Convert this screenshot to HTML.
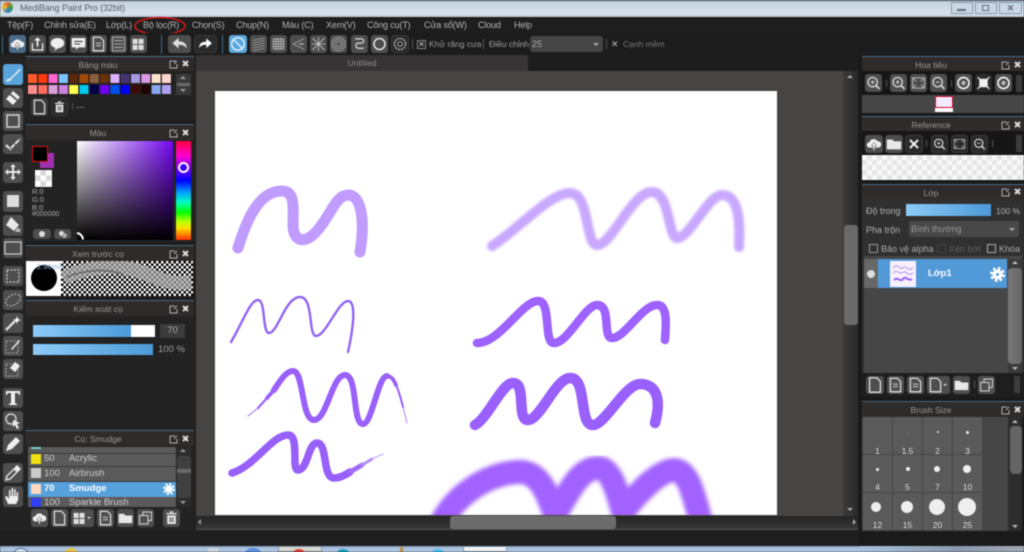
<!DOCTYPE html>
<html><head><meta charset="utf-8"><title>MediBang Paint Pro</title>
<style>
html,body{margin:0;padding:0;background:#1f1f1f}
#r{position:relative;width:1024px;height:552px;overflow:hidden;background:#1f1f1f;font-family:"Liberation Sans",sans-serif;font-size:9px;color:#a8a8a8;filter:blur(.4px)}
#r div,#r span,#r svg{position:absolute}
#r svg *{position:static}
.t{white-space:nowrap;line-height:12px}
.m{top:19px;font-size:9px;letter-spacing:-.15px;color:#b4b4b4;white-space:nowrap;line-height:12px}
.b{background:#4f4e4e;border-radius:3px}
.d{background:#2a2a2a;border-radius:3px;border:1px solid #3a3a3a;box-sizing:border-box}
.h{background:#2f2b2b;border-top:1px solid #4a6a80;box-sizing:border-box;text-align:center;line-height:16px;color:#989898;font-size:8.5px;padding-right:24px}
.sl{background:linear-gradient(90deg,#8ccbf8,#4c9ad8)}
.sep{width:1px;background:#555}
.row{left:28px;width:148px;background:#5a5a5a;border-bottom:1px solid #3a3a3a;box-sizing:border-box}
.c{background:#5a5a5a;width:29px;height:37px}
.c i{position:absolute;background:#eee;border-radius:50%;display:block}
.c b{position:absolute;left:0;right:0;bottom:0;text-align:center;font-weight:normal;font-size:8.5px;color:#ddd;line-height:10px}
</style></head><body>
<div id="r">
<svg width="0" height="0" style="display:none"><defs>
<symbol id="brush" viewBox="0 0 20 20"><path d="M3 17c1-3 3-3 4-3L17 4l1 1L8 15c-1 2-3 2-5 2z" fill="#eee"/></symbol>
<symbol id="eraser" viewBox="0 0 20 20"><path d="M10 3l7 6-7 8-7-6z" fill="#eee"/><path d="M7 6l7 6" stroke="#444" stroke-width="1.5"/></symbol>
<symbol id="square" viewBox="0 0 20 20"><rect x="4" y="4" width="12" height="12" fill="none" stroke="#ccc" stroke-width="1.6"/></symbol>
<symbol id="check" viewBox="0 0 20 20"><path d="M3 11l5 5M8 14L17 5" stroke="#e8e8e8" stroke-width="2" fill="none" stroke-dasharray="5 1"/></symbol>
<symbol id="move" viewBox="0 0 20 20"><path d="M10 2l3 3h-2v4h4V7l3 3-3 3v-2h-4v4h2l-3 3-3-3h2v-4H5v2l-3-3 3-3v2h4V5H7z" fill="#e8e8e8"/></symbol>
<symbol id="fill" viewBox="0 0 20 20"><rect x="4" y="4" width="12" height="12" fill="#ddd"/></symbol>
<symbol id="bucket" viewBox="0 0 20 20"><path d="M8 2l8 8-5 6-8-6z" fill="#e8e8e8"/><path d="M14 13c3 0 4 2 3 4h-5z" fill="#bbb"/></symbol>
<symbol id="grad" viewBox="0 0 20 20"><defs><linearGradient id="g1"><stop offset="0" stop-color="#777"/><stop offset="1" stop-color="#eee"/></linearGradient></defs><rect x="2" y="4" width="16" height="12" fill="url(#g1)" stroke="#ddd"/></symbol>
<symbol id="sel" viewBox="0 0 20 20"><rect x="4" y="4" width="12" height="12" fill="none" stroke="#ccc" stroke-width="1.3" stroke-dasharray="2 1.5"/></symbol>
<symbol id="lasso" viewBox="0 0 20 20"><ellipse cx="10" cy="10" rx="8" ry="5" transform="rotate(-30 10 10)" fill="none" stroke="#aaa" stroke-width="1.3" stroke-dasharray="2 1.5"/></symbol>
<symbol id="wand" viewBox="0 0 20 20"><path d="M3 17L12 8" stroke="#ddd" stroke-width="2.4"/><path d="M14 3l1 3 3 1-3 1-1 3-1-3-3-1 3-1z" fill="#fff"/></symbol>
<symbol id="pensel" viewBox="0 0 20 20"><rect x="3" y="5" width="12" height="12" fill="none" stroke="#aaa" stroke-dasharray="2 1.5"/><path d="M8 13l8-9 1 1-8 9z" fill="#eee"/></symbol>
<symbol id="erasel" viewBox="0 0 20 20"><rect x="3" y="5" width="12" height="12" fill="none" stroke="#aaa" stroke-dasharray="2 1.5"/><path d="M12 3l5 4-5 6-5-4z" fill="#eee"/></symbol>
<symbol id="T" viewBox="0 0 20 20"><path d="M3 3h14v4h-1l-1-2h-3v10l2 1v1H6v-1l2-1V5H5L4 7H3z" fill="#eee"/></symbol>
<symbol id="lsel" viewBox="0 0 20 20"><circle cx="8" cy="8" r="5" fill="none" stroke="#ccc" stroke-width="1.5"/><path d="M10 9l7 3-3 1 2 4-2 1-2-4-2 2z" fill="#eee"/></symbol>
<symbol id="pen" viewBox="0 0 20 20"><path d="M3 17l2-6 8-8 4 4-8 8z" fill="#eee"/></symbol>
<symbol id="drop" viewBox="0 0 20 20"><path d="M3 17l1-4 7-7 3 3-7 7z" fill="none" stroke="#ddd" stroke-width="1.5"/><path d="M11 5l3-3 4 4-3 3z" fill="#eee"/></symbol>
<symbol id="hand" viewBox="0 0 20 20"><path d="M5 18l-3-7 2-1 2 3V4h1.500v6h1V2h1.600v8h1V3h1.500v7h1V6h1.500v8l-2 4z" fill="#eee"/></symbol>
<symbol id="cloud" viewBox="0 0 20 20"><path d="M5 14a3 3 0 010-6 5 5 0 019-1 3.500 3.500 0 011 7z" fill="#eee"/><path d="M10 8l3 4h-2v5H9v-5H7z" fill="#eee" stroke="#444" stroke-width=".5"/></symbol>
<symbol id="share" viewBox="0 0 20 20"><path d="M4 9v8h12V9" fill="none" stroke="#eee" stroke-width="1.500"/><path d="M10 2l4 4h-3v7H9V6H6z" fill="#eee"/></symbol>
<symbol id="bub" viewBox="0 0 20 20"><ellipse cx="10" cy="9" rx="8" ry="6" fill="#eee"/><path d="M8 14l-2 4 5-3z" fill="#eee"/></symbol>
<symbol id="bub2" viewBox="0 0 20 20"><path d="M2 3h16v11h-8l-3 3v-3H2z" fill="#eee"/><path d="M5 7h10M5 10h7" stroke="#444" stroke-width="1.300"/></symbol>
<symbol id="doc" viewBox="0 0 20 20"><path d="M4 2h8l4 4v12H4z" fill="none" stroke="#ddd" stroke-width="1.500"/><path d="M7 9h6M7 12h6" stroke="#ddd"/></symbol>
<symbol id="page" viewBox="0 0 20 20"><path d="M4 2h8l4 4v12H4z" fill="none" stroke="#ddd" stroke-width="1.500"/></symbol>
<symbol id="list" viewBox="0 0 20 20"><rect x="3" y="2" width="14" height="16" fill="none" stroke="#bbb"/><path d="M5 6h10M5 10h10M5 14h10" stroke="#bbb"/></symbol>
<symbol id="tiles" viewBox="0 0 20 20"><path d="M3 4h6v6H3zM10 4h6v6h-6zM3 11h6v6H3zM10 11h6v6h-6z" fill="#ddd"/></symbol>
<symbol id="undo" viewBox="0 0 20 20"><path d="M2 9l7-6v4c5 0 9 2 9 8-2-3-5-4-9-4v4z" fill="#ddd"/></symbol>
<symbol id="redo" viewBox="0 0 20 20"><path d="M18 9l-7-6v4C6 7 2 9 2 15c2-3 5-4 9-4v4z" fill="#fff"/></symbol>
<symbol id="no" viewBox="0 0 20 20"><circle cx="10" cy="10" r="7" fill="none" stroke="#fff" stroke-width="1.300"/><path d="M5 5l10 10" stroke="#fff" stroke-width="1.300"/></symbol>
<symbol id="s1" viewBox="0 0 20 20"><path d="M3 6l14-3M3 9l14-3M3 12l14-3M3 15l14-3M3 18l14-3" stroke="#999"/></symbol>
<symbol id="s2" viewBox="0 0 20 20"><path d="M4 4h12v12H4zM7 3v14M10 3v14M13 3v14M3 7h14M3 10h14M3 13h14" stroke="#bbb" fill="none"/></symbol>
<symbol id="s3" viewBox="0 0 20 20"><path d="M16 4L4 10l12 6M16 9l-6 1 6 1" stroke="#aaa" fill="none"/></symbol>
<symbol id="s4" viewBox="0 0 20 20"><path d="M3 3l14 14M17 3L3 17M10 2v16M2 10h16" stroke="#ccc"/></symbol>
<symbol id="s5" viewBox="0 0 20 20"><circle cx="10" cy="10" r="8" fill="none" stroke="#aaa"/><circle cx="10" cy="10" r="5.500" fill="none" stroke="#aaa"/><circle cx="10" cy="10" r="3" fill="none" stroke="#aaa"/></symbol>
<symbol id="s6" viewBox="0 0 20 20"><path d="M5 4h7c4 0 4 5 0 5H8c-3 0-3 6 1 6h6" fill="none" stroke="#ddd" stroke-width="1.400"/></symbol>
<symbol id="s7" viewBox="0 0 20 20"><circle cx="10" cy="10" r="6.500" fill="none" stroke="#eee" stroke-width="1.600"/></symbol>
<symbol id="gear" viewBox="0 0 20 20"><circle cx="10" cy="10" r="3" fill="none" stroke="#ccc"/><circle cx="10" cy="10" r="7" fill="none" stroke="#ccc" stroke-width="1.500" stroke-dasharray="2.500 1.200"/></symbol>
<symbol id="trash" viewBox="0 0 20 20"><path d="M4 5h12M8 3h4" stroke="#eee" stroke-width="1.500"/><path d="M5 7h10v10H5z" fill="#eee"/><path d="M8 9v6M10 9v6M12 9v6" stroke="#444"/></symbol>
<symbol id="folder" viewBox="0 0 20 20"><path d="M2 5h6l2 2h8v9H2z" fill="#e8e8e8"/></symbol>
<symbol id="dup" viewBox="0 0 20 20"><rect x="3" y="7" width="10" height="10" fill="none" stroke="#ccc" stroke-width="1.300"/><path d="M7 7V3h10v10h-4" fill="none" stroke="#ccc" stroke-width="1.300"/></symbol>
<symbol id="zoomp" viewBox="0 0 20 20"><circle cx="9" cy="9" r="5.500" fill="none" stroke="#ddd" stroke-width="1.500"/><path d="M13 13l4 4" stroke="#ddd" stroke-width="2"/><path d="M6.500 9h5M9 6.500v5" stroke="#ddd"/></symbol>
<symbol id="zoomm" viewBox="0 0 20 20"><circle cx="9" cy="9" r="5.500" fill="none" stroke="#ddd" stroke-width="1.500"/><path d="M13 13l4 4" stroke="#ddd" stroke-width="2"/><path d="M6.500 9h5" stroke="#ddd"/></symbol>
<symbol id="fit" viewBox="0 0 20 20"><rect x="3" y="4" width="14" height="12" fill="none" stroke="#ccc"/><path d="M4 5l3 3M16 5l-3 3M4 15l3-3M16 15l-3-3" stroke="#ccc"/></symbol>
<symbol id="rot" viewBox="0 0 20 20"><circle cx="10" cy="10" r="6.500" fill="none" stroke="#eee" stroke-width="2"/><circle cx="10" cy="10" r="2.500" fill="#bbb"/></symbol>
<symbol id="cross" viewBox="0 0 20 20"><path d="M5 5l10 10M15 5L5 15" stroke="#eee" stroke-width="2.500"/></symbol>
<symbol id="frame" viewBox="0 0 20 20"><rect x="5" y="5" width="10" height="10" fill="#eee"/><path d="M3 3l3 3M17 3l-3 3M3 17l3-3M17 17l-3-3" stroke="#eee" stroke-width="1.500"/></symbol>
</defs></svg>

<!-- title bar -->
<div style="left:0;top:0;width:1024px;height:17px;background:linear-gradient(#5c6a74 0,#c6d2de 2px,#d8e2ec 14px,#c0ccd8 16px)"></div>
<div style="left:2px;top:2px;width:11px;height:11px;border-radius:50%;background:conic-gradient(#e8702a,#38a040,#3080d0,#e8c030,#e8702a)"></div>
<div class="t" style="left:20px;top:2px;font-size:9px;letter-spacing:-.12px;color:#5a5f66">MediBang Paint Pro (32bit)</div>
<div style="left:951px;top:2px;width:22px;height:12px;background:#c8d8e6;border:1px solid #8a9aaa;box-sizing:border-box"><span style="left:5px;top:6px;width:9px;height:2px;background:#667"></span></div>
<div style="left:975px;top:2px;width:22px;height:12px;background:#c8d8e6;border:1px solid #8a9aaa;box-sizing:border-box"><span style="left:6px;top:2px;width:7px;height:6px;border:1px solid #667;box-sizing:border-box"></span></div>
<div style="left:999px;top:2px;width:23px;height:12px;background:#c8d8e6;border:1px solid #8a9aaa;box-sizing:border-box;text-align:center;color:#667;line-height:10px;font-size:9px;font-weight:bold">✕</div>

<!-- menu -->
<div style="left:0;top:17px;width:1024px;height:16px;background:#1e1e1e;border-bottom:1px solid #2c2c2c"></div>
<span class="m" style="left:7px">Tệp(F)</span><span class="m" style="left:44px">Chỉnh sửa(E)</span><span class="m" style="left:106px">Lớp(L)</span><span class="m" style="left:143px">Bộ lọc(R)</span><span class="m" style="left:192px">Chọn(S)</span><span class="m" style="left:236px">Chụp(N)</span><span class="m" style="left:282px">Màu (C)</span><span class="m" style="left:326px">Xem(V)</span><span class="m" style="left:367px">Công cụ(T)</span><span class="m" style="left:424px">Cửa sổ(W)</span><span class="m" style="left:478px">Cloud</span><span class="m" style="left:514px">Help</span>
<svg style="left:130px;top:15px" width="60" height="22"><ellipse cx="30" cy="11" rx="25" ry="8.500" fill="none" stroke="#d01818" stroke-width="1.500"/></svg>

<!-- toolbar -->
<div style="left:0;top:33px;width:1024px;height:22px;background:#1c1c1c"></div>
<div class="sep" style="left:2px;top:35px;height:19px;background:#3e6a8c"></div>
<div class="b" style="left:9px;top:35px;width:17px;height:18px;background:#4a6a88"><svg width="17" height="18"><use href="#cloud"/></svg></div>
<div class="b" style="left:29px;top:35px;width:17px;height:18px"><svg width="17" height="18"><use href="#share"/></svg></div>
<div class="b" style="left:49px;top:35px;width:17px;height:18px"><svg width="17" height="18"><use href="#bub"/></svg></div>
<div class="b" style="left:70px;top:35px;width:17px;height:18px"><svg width="17" height="18"><use href="#bub2"/></svg></div>
<div class="b" style="left:90px;top:35px;width:17px;height:18px"><svg width="17" height="18"><use href="#doc"/></svg></div>
<div class="b" style="left:110px;top:35px;width:17px;height:18px"><svg width="17" height="18"><use href="#list"/></svg></div>
<div class="b" style="left:130px;top:35px;width:17px;height:18px"><svg width="17" height="18"><use href="#tiles"/></svg></div>
<div class="sep" style="left:161px;top:35px;height:19px;background:#3e6a8c"></div>
<div class="b" style="left:168px;top:35px;width:23px;height:18px"><svg x="0" width="23" height="18"><use href="#undo"/></svg></div>
<div class="d" style="left:194px;top:35px;width:23px;height:18px"><svg width="21" height="16"><use href="#redo"/></svg></div>
<div class="sep" style="left:222px;top:35px;height:19px;background:#3e6a8c"></div>
<div class="b" style="left:229px;top:35px;width:18px;height:18px;background:#5aa8e0"><svg width="18" height="18"><use href="#no"/></svg></div>
<div class="b" style="left:250px;top:35px;width:17px;height:18px"><svg width="17" height="18"><use href="#s1"/></svg></div>
<div class="b" style="left:270px;top:35px;width:17px;height:18px"><svg width="17" height="18"><use href="#s2"/></svg></div>
<div class="b" style="left:290px;top:35px;width:17px;height:18px"><svg width="17" height="18"><use href="#s3"/></svg></div>
<div class="b" style="left:310px;top:35px;width:17px;height:18px"><svg width="17" height="18"><use href="#s4"/></svg></div>
<div class="b" style="left:330px;top:35px;width:17px;height:18px"><svg width="17" height="18"><use href="#s5"/></svg></div>
<div class="b" style="left:351px;top:35px;width:17px;height:18px"><svg width="17" height="18"><use href="#s6"/></svg></div>
<div class="b" style="left:371px;top:35px;width:17px;height:18px"><svg width="17" height="18"><use href="#s7"/></svg></div>
<div class="d" style="left:391px;top:35px;width:18px;height:18px"><svg width="16" height="16"><use href="#gear"/></svg></div>
<div class="sep" style="left:412px;top:39px;height:10px"></div>
<div style="left:417px;top:40px;width:9px;height:9px;border:1px solid #888;box-sizing:border-box;color:#ccc;font-size:8px;line-height:7px;text-align:center">✕</div>
<span class="t" style="left:429px;top:38px;font-size:8.500px;color:#9a9a9a">Khử răng cưa</span>
<div class="sep" style="left:483px;top:39px;height:10px"></div>
<span class="t" style="left:489px;top:38px;font-size:8.500px;color:#a0a0a0">Điều chỉnh</span>
<div class="b" style="left:530px;top:36px;width:73px;height:16px;background:#454545"><span class="t" style="left:2px;top:2px;color:#a8a8a8;font-size:9px">25</span><span style="left:63px;top:7px;border:3px solid transparent;border-top-color:#aaa"></span></div>
<div class="sep" style="left:606px;top:39px;height:10px"></div>
<span style="left:611px;top:38px;font-size:9px;color:#bbb;line-height:12px">✕</span>
<span class="t" style="left:623px;top:38px;font-size:8.500px;color:#7a7a7a">Cạnh mềm</span>

<!-- left tools -->
<div style="left:0;top:55px;width:26px;height:475px;background:#232323"></div>
<div class="b" style="left:3px;top:64px;width:20px;height:21px;background:#5aa4dc"><svg width="20" height="21"><use href="#brush"/></svg></div>
<div class="b" style="left:3px;top:88px;width:20px;height:20px"><svg width="20" height="20"><use href="#eraser"/></svg></div>
<div class="b" style="left:3px;top:111px;width:20px;height:20px"><svg width="20" height="20"><use href="#square"/></svg></div>
<div class="b" style="left:3px;top:134px;width:20px;height:20px"><svg width="20" height="20"><use href="#check"/></svg></div>
<div class="b" style="left:3px;top:162px;width:20px;height:21px"><svg width="20" height="20"><use href="#move"/></svg></div>
<div class="b" style="left:3px;top:191px;width:20px;height:21px"><svg width="20" height="20"><use href="#fill"/></svg></div>
<div class="b" style="left:3px;top:215px;width:20px;height:21px"><svg width="20" height="20"><use href="#bucket"/></svg></div>
<div class="b" style="left:3px;top:238px;width:20px;height:20px"><svg width="20" height="20"><use href="#grad"/></svg></div>
<div class="b" style="left:3px;top:266px;width:20px;height:20px"><svg width="20" height="20"><use href="#sel"/></svg></div>
<div class="b" style="left:3px;top:290px;width:20px;height:20px"><svg width="20" height="20"><use href="#lasso"/></svg></div>
<div class="b" style="left:3px;top:313px;width:20px;height:20px"><svg width="20" height="20"><use href="#wand"/></svg></div>
<div class="b" style="left:3px;top:336px;width:20px;height:20px"><svg width="20" height="20"><use href="#pensel"/></svg></div>
<div class="b" style="left:3px;top:359px;width:20px;height:20px"><svg width="20" height="20"><use href="#erasel"/></svg></div>
<div class="b" style="left:3px;top:388px;width:20px;height:20px"><svg width="20" height="20"><use href="#T"/></svg></div>
<div class="b" style="left:3px;top:411px;width:20px;height:20px"><svg width="20" height="20"><use href="#lsel"/></svg></div>
<div class="b" style="left:3px;top:434px;width:20px;height:20px"><svg width="20" height="20"><use href="#pen"/></svg></div>
<div class="b" style="left:3px;top:463px;width:20px;height:20px"><svg width="20" height="20"><use href="#drop"/></svg></div>
<div class="b" style="left:3px;top:486px;width:20px;height:21px"><svg width="20" height="20"><use href="#hand"/></svg></div>

<!-- left panels -->
<div style="left:26px;top:56px;width:168px;height:474px;background:#1c1c1c"></div>
<!-- palette -->
<div class="h" style="left:26px;top:56px;width:168px;height:15px">Bảng màu</div>
<div style="left:26px;top:71px;width:168px;height:50px;background:#222"></div>
<svg style="left:28px;top:74px" width="147" height="21"><g id="p">
<rect x="0" y="0" width="9" height="9" fill="#ff5a2a"/><rect x="10.300" y="0" width="9" height="9" fill="#ff3c0a"/><rect x="20.600" y="0" width="9" height="9" fill="#ff66cc"/><rect x="30.900" y="0" width="9" height="9" fill="#7cc4ff"/><rect x="41.200" y="0" width="9" height="9" fill="#5a2808"/><rect x="51.500" y="0" width="9" height="9" fill="#a04a08"/><rect x="61.800" y="0" width="9" height="9" fill="#8a6040"/><rect x="72.100" y="0" width="9" height="9" fill="#6a3008"/><rect x="82.400" y="0" width="9" height="9" fill="#dcb0ff"/><rect x="92.700" y="0" width="9" height="9" fill="#463470"/><rect x="103" y="0" width="9" height="9" fill="#a898e0"/><rect x="113.300" y="0" width="9" height="9" fill="#dc98e0"/><rect x="123.600" y="0" width="9" height="9" fill="#ffe4cc"/><rect x="133.900" y="0" width="9" height="9" fill="#ffd4cc"/>
<rect x="0" y="11" width="9" height="9" fill="#ff8c8c"/><rect x="10.300" y="11" width="9" height="9" fill="#ff6c60"/><rect x="20.600" y="11" width="9" height="9" fill="#dca0d8"/><rect x="30.900" y="11" width="9" height="9" fill="#cc80e0"/><rect x="41.200" y="11" width="9" height="9" fill="#ffff50"/><rect x="51.500" y="11" width="9" height="9" fill="#00c8f0"/><rect x="61.800" y="11" width="9" height="9" fill="#00004a"/><rect x="72.100" y="11" width="9" height="9" fill="#7000f0"/><rect x="82.400" y="11" width="9" height="9" fill="#0050f0"/><rect x="92.700" y="11" width="9" height="9" fill="#0000f0"/><rect x="103" y="11" width="9" height="9" fill="#380c00"/><rect x="113.300" y="11" width="9" height="9" fill="#200400"/><rect x="123.600" y="11" width="9" height="9" fill="#88a8f0"/><rect x="133.900" y="11" width="9" height="9" fill="#b0a0f0"/>
</g></svg>
<div style="left:176px;top:74px;width:15px;height:21px;background:#3a3a3a"></div>
<span style="left:180px;top:76px;border:3px solid transparent;border-bottom-color:#999;border-top:0"></span>
<div style="left:177px;top:83px;width:13px;height:3px;background:#6a6a6a"></div>
<span style="left:180px;top:89px;border:3px solid transparent;border-top-color:#999;border-bottom:0"></span>
<div class="b" style="left:31px;top:98px;width:17px;height:18px;background:#3c3c3c"><svg width="17" height="18"><use href="#page"/></svg></div>
<div class="d" style="left:51px;top:98px;width:17px;height:18px"><svg width="15" height="16"><use href="#trash"/></svg></div>
<div class="sep" style="left:72px;top:103px;height:7px"></div>
<span class="t" style="left:76px;top:101px;font-size:9px;color:#999">---</span>
<!-- color -->
<div class="h" style="left:26px;top:124px;width:168px;height:16px">Màu</div>
<div style="left:26px;top:140px;width:168px;height:102px;background:#232323"></div>
<div style="left:40px;top:153px;width:14px;height:15px;background:#a030b0"></div>
<div style="left:32px;top:146px;width:16px;height:16px;background:#000;border:1px solid #e01010;box-sizing:border-box"></div>
<div style="left:35px;top:170px;width:17px;height:17px;background:repeating-conic-gradient(#d8d8d8 0 25%,#fff 0 50%) 0 0/11px 11px"></div>
<span class="t" style="left:32px;top:188px;font-size:7.500px;line-height:8px;color:#aaa">R:0</span>
<span class="t" style="left:32px;top:196px;font-size:7.500px;line-height:8px;color:#aaa">G:0</span>
<span class="t" style="left:32px;top:204px;font-size:7.500px;line-height:8px;color:#aaa">B:0</span>
<span class="t" style="left:32px;top:210px;font-size:7px;line-height:9px;color:#aaa">#000000</span>
<div class="b" style="left:33px;top:229px;width:18px;height:10px"><span style="left:6px;top:2px;width:6px;height:6px;border-radius:50%;background:#ddd"></span></div>
<div class="b" style="left:54px;top:229px;width:17px;height:10px"><span style="left:5px;top:2px;width:5px;height:5px;border-radius:50%;background:#ddd"></span><span style="left:8px;top:4px;width:5px;height:5px;border-radius:50%;background:#aaa"></span></div>
<div style="left:77px;top:141px;width:96px;height:99px;background:linear-gradient(transparent,#000),linear-gradient(90deg,#fff,#7408f0)"></div>
<svg style="left:77px;top:231px" width="10" height="9"><path d="M0 2a7 7 0 016 6.500" fill="none" stroke="#fff" stroke-width="2"/></svg>
<div style="left:176px;top:141px;width:15px;height:99px;background:linear-gradient(#ff0040,#ff00d0 15%,#6000ff 30%,#0000ff 40%,#00a0ff 52%,#00ffc0 62%,#00ff00 72%,#c0ff00 82%,#ffe000 88%,#ff3000)"></div>
<div style="left:178px;top:162px;width:11px;height:11px;border:2px solid #fff;border-radius:50%;box-sizing:border-box;background:#4000ff"></div>
<!-- preview -->
<div class="h" style="left:26px;top:245px;width:168px;height:16px">Xem trước cọ</div>
<div style="left:61px;top:261px;width:132px;height:35px;background:repeating-conic-gradient(#000 0 25%,#fff 0 50%) 0 0/5px 5px"></div>
<div style="left:26px;top:261px;width:35px;height:35px;background:#fff"></div>
<div style="left:31px;top:265px;width:26px;height:26px;background:#000;border-radius:50%"></div>
<span class="t" style="left:37px;top:262px;font-size:7.500px;line-height:9px;color:#8cb0d8">2.96mm</span>
<svg style="left:61px;top:261px" width="132" height="35"><path d="M2 17C25 6 50 4 70 8s35 18 60 13" fill="none" stroke="#aaa" stroke-width="14" opacity=".7"/><path d="M6 16c20-8 40-8 56-3" fill="none" stroke="#666" stroke-width="1.500"/></svg>
<!-- control -->
<div class="h" style="left:26px;top:300px;width:168px;height:16px">Kiểm soát cọ</div>
<div style="left:26px;top:316px;width:168px;height:114px;background:#222"></div>
<div style="left:33px;top:325px;width:122px;height:12px;background:#fff"></div>
<div class="sl" style="left:33px;top:325px;width:98px;height:12px"></div>
<div style="left:160px;top:324px;width:25px;height:14px;background:#3c3c3c;text-align:center;line-height:14px;color:#aaa;font-size:9.500px">70</div>
<div class="sl" style="left:33px;top:344px;width:120px;height:11px"></div>
<span class="t" style="left:158px;top:344px;font-size:9.500px;color:#a0a0a0">100 %</span>
<!-- brush -->
<div class="h" style="left:26px;top:430px;width:168px;height:16px">Cọ: Smudge</div>
<div style="left:26px;top:446px;width:168px;height:84px;background:#232323"></div>
<div style="left:28px;top:447px;width:148px;height:60px;background:#5a5a5a"></div>
<div class="row" style="top:447px;height:7px"></div>
<div style="left:31px;top:447px;width:10px;height:2px;background:#7cc"></div>
<div class="row" style="top:454px;height:13px"></div>
<div class="row" style="top:467px;height:15px"></div>
<div class="row" style="top:482px;height:15px;background:#56a0dc;border:0"></div>
<div style="left:28px;top:497px;width:148px;height:10px;background:#5a5a5a;overflow:hidden"><span style="left:3px;top:1px;width:10px;height:10px;background:#3040f0"></span><span class="t" style="left:16px;top:0;font-size:9.500px;color:#ccc">100</span><span class="t" style="left:41px;top:0;font-size:9.500px;color:#ccc">Sparkle Brush</span></div>
<div style="left:31px;top:454px;width:10px;height:10px;background:#f0e010"></div>
<span class="t" style="left:44px;top:453px;font-size:9.500px;color:#ccc">50</span><span class="t" style="left:69px;top:453px;font-size:9.500px;color:#ccc">Acrylic</span>
<div style="left:31px;top:468px;width:10px;height:10px;background:#ccc"></div>
<span class="t" style="left:44px;top:468px;font-size:9.500px;color:#ccc">100</span><span class="t" style="left:69px;top:468px;font-size:9.500px;color:#ccc">Airbrush</span>
<div style="left:31px;top:484px;width:10px;height:10px;background:#fcd8c0"></div>
<span class="t" style="left:44px;top:483px;font-size:9.500px;color:#fff;font-weight:bold">70</span><span class="t" style="left:69px;top:483px;font-size:9.500px;color:#fff;font-weight:bold">Smudge</span>
<svg style="left:163px;top:483px" width="12" height="12" viewBox="0 0 20 20"><circle cx="10" cy="10" r="6" fill="#fff"/><circle cx="10" cy="10" r="8" fill="none" stroke="#fff" stroke-width="4" stroke-dasharray="3.500 2.800"/></svg>
<div style="left:177px;top:447px;width:14px;height:60px;background:#2c2c2c"></div>
<div style="left:177px;top:456px;width:14px;height:42px;background:#3f3f3f;border-radius:3px"></div>
<div style="left:177px;top:469px;width:14px;height:4px;background:#6a6a6a"></div>
<span style="left:180px;top:449px;border:3px solid transparent;border-bottom-color:#999;border-top:0"></span>
<span style="left:180px;top:501px;border:3px solid transparent;border-top-color:#999;border-bottom:0"></span>
<div class="b" style="left:31px;top:509px;width:17px;height:18px"><svg width="17" height="18"><use href="#cloud"/></svg></div>
<div class="b" style="left:51px;top:509px;width:17px;height:18px"><svg width="17" height="18"><use href="#page"/></svg></div>
<div class="b" style="left:71px;top:509px;width:23px;height:18px"><svg width="17" height="18"><use href="#tiles"/></svg><span style="left:16px;top:8px;border:2.500px solid transparent;border-top-color:#ddd"></span></div>
<div class="b" style="left:97px;top:509px;width:17px;height:18px"><svg width="17" height="18"><use href="#doc"/></svg></div>
<div class="b" style="left:117px;top:509px;width:17px;height:18px"><svg width="17" height="18"><use href="#folder"/></svg></div>
<div class="b" style="left:137px;top:509px;width:17px;height:18px"><svg width="17" height="18"><use href="#dup"/></svg></div>
<div class="b" style="left:163px;top:509px;width:17px;height:18px"><svg width="17" height="18"><use href="#trash"/></svg></div>

<!-- center -->
<div style="left:196px;top:55px;width:332px;height:16px;background:#363434;border-radius:2px 2px 0 0;text-align:center;line-height:17px;color:#8c8c8c;font-size:8.500px">Untitled</div>
<div style="left:528px;top:55px;width:334px;height:16px;background:#1d1d1d"></div>
<div style="left:196px;top:71px;width:647px;height:445px;background:#464544"></div>
<div style="left:843px;top:71px;width:15px;height:445px;background:linear-gradient(90deg,#3a3a3a,#2a2a2a)"></div>
<div style="left:844px;top:225px;width:14px;height:100px;background:#6a6a6a;border-radius:3px"></div>
<span style="left:847px;top:75px;border:3.500px solid transparent;border-bottom-color:#aaa;border-top:0"></span>
<span style="left:847px;top:508px;border:3.500px solid transparent;border-top-color:#aaa;border-bottom:0"></span>

<!-- canvas -->
<div style="left:215px;top:91px;width:562px;height:424px;background:#fff;overflow:hidden">
<svg style="left:-215px;top:-91px" width="1024" height="552" viewBox="0 0 1024 552" fill="none" stroke-linecap="round" stroke-linejoin="round">
<defs><filter id="b1" x="-10%" y="-20%" width="120%" height="140%"><feGaussianBlur stdDeviation="1.300"/></filter><filter id="b2" x="-10%" y="-20%" width="120%" height="140%"><feGaussianBlur stdDeviation="2"/></filter></defs>
<path d="M238 248C246 222 258 191 282 191C296 191 293 210 293 225C293 240 303 245 315 233C330 218 335 195 348 195C362 195 365 222 360 252" stroke="#c09cff" stroke-width="11"/>
<path d="M231 342C243 322 250 300 258 300C266 300 262 333 269 333C278 333 285 297 300 297C314 297 308 336 316 336C326 336 338 301 348 301C356 301 354 325 348 352" stroke="#9265f5" stroke-width="2.400"/>
<path d="M248 416L258 408" stroke="#9a60fa" stroke-width=".9"/><path d="M258 408L267 398" stroke="#9a60fa" stroke-width="2.200"/><path d="M267 398L274 390" stroke="#9a60fa" stroke-width="3.800"/>
<path d="M274 390C280 381 286 371 293 371C304 371 301 420 314 420C327 420 332 375 345 375C358 375 352 424 363 424C372 424 378 376 387 376" stroke="#9a60fa" stroke-width="6"/>
<path d="M387 376C391 376 394 380 396 385" stroke="#9a60fa" stroke-width="3.800"/><path d="M396 385C399 391 401 399 403 407" stroke="#9a60fa" stroke-width="2"/><path d="M403 407L407 423" stroke="#9a60fa" stroke-width=".8"/>
<path d="M232 473C255 466 272 435 288 435C300 435 291 470 298 470C308 470 308 443 317 443C328 443 322 478 334 478C340 478 345 475 350 472" stroke="#9860fa" stroke-width="7.500"/>
<path d="M350 472L362 465" stroke="#a06cfa" stroke-width="5"/><path d="M362 465L372 459" stroke="#b48cfb" stroke-width="3"/><path d="M372 459L383 454" stroke="#ccb0fc" stroke-width="1.300"/>
<path d="M492 246C520 228 550 193 570 193C590 193 585 245 597 245C612 245 632 192 652 192C670 192 668 238 677 238C690 238 708 195 722 195C740 195 740 225 739 247" stroke="#c9a8ff" stroke-width="10" filter="url(#b1)"/>
<path d="M477 343C500 343 522 301 538 301C552 301 543 343 554 343C568 343 585 305 597 305C612 305 602 338 612 338C625 338 642 305 657 305C668 305 666 325 665 340" stroke="#9e62ff" stroke-width="8.500"/>
<path d="M475 425C488 418 502 383 513 383C527 383 516 420 528 420C540 420 556 378 570 378C588 378 578 425 593 425C605 425 625 384 640 384C660 384 660 405 655 423" stroke="#9a60fc" stroke-width="10.500"/>
<path d="M438 530C452 495 490 472 520 472C540 472 548 495 555 515C570 490 580 468 598 468C612 468 618 495 623 512C640 490 660 470 675 470C690 472 695 500 703 530" stroke="#a262ff" stroke-width="24" filter="url(#b2)"/>
</svg>
</div>

<!-- h scrollbar -->
<div style="left:196px;top:516px;width:662px;height:14px;background:linear-gradient(#242424,#383838);border-bottom:1px solid #555;box-sizing:border-box"></div>
<div style="left:450px;top:516px;width:166px;height:13px;background:#6c6c6c;border-radius:3px"></div>
<span style="left:198px;top:519px;border:3px solid transparent;border-right-color:#999;border-left:0"></span>
<span style="left:853px;top:519px;border:3px solid transparent;border-left-color:#aaa;border-right:0"></span>

<!-- right side -->
<div style="left:858px;top:55px;width:166px;height:491px;background:#1a1a1a"></div>
<div class="h" style="left:862px;top:56px;width:162px;height:15px">Hoa tiêu</div>
<div style="left:862px;top:71px;width:162px;height:24px;background:#161616"></div>
<div style="left:862px;top:95px;width:162px;height:18px;background:#464646"></div>
<div class="b" style="left:865px;top:74px;width:17px;height:18px"><svg width="17" height="18"><use href="#zoomp"/></svg></div>
<div class="sep" style="left:886px;top:80px;height:7px"></div>
<div class="b" style="left:890px;top:74px;width:17px;height:18px"><svg width="17" height="18"><use href="#zoomp"/></svg></div>
<div class="b" style="left:910px;top:74px;width:17px;height:18px"><svg width="17" height="18"><use href="#fit"/></svg></div>
<div class="b" style="left:930px;top:74px;width:17px;height:18px"><svg width="17" height="18"><use href="#zoomm"/></svg></div>
<div class="sep" style="left:951px;top:80px;height:7px"></div>
<div class="b" style="left:955px;top:74px;width:17px;height:18px"><svg width="17" height="18"><use href="#rot"/></svg></div>
<div class="b" style="left:975px;top:74px;width:17px;height:18px;background:#2a2a2a"><svg width="17" height="18"><use href="#frame"/></svg></div>
<div class="b" style="left:995px;top:74px;width:17px;height:18px"><svg width="17" height="18"><use href="#rot"/></svg></div>
<div style="left:1016px;top:75px;width:6px;height:17px;background:#3c3c3c"></div>
<div style="left:935px;top:96px;width:18px;height:12px;background:#f4e8fc;border:1.500px solid #d01030;box-sizing:border-box"></div>
<div style="left:935px;top:108px;width:18px;height:4px;background:#fff"></div>

<div class="h" style="left:862px;top:116px;width:162px;height:15px">Reference</div>
<div style="left:862px;top:131px;width:162px;height:24px;background:#161616"></div>
<div class="b" style="left:865px;top:135px;width:18px;height:18px"><svg width="18" height="18"><use href="#cloud"/></svg></div>
<div class="b" style="left:885px;top:135px;width:18px;height:18px"><svg width="18" height="18"><use href="#folder"/></svg></div>
<div class="d" style="left:905px;top:135px;width:18px;height:18px"><svg width="16" height="16"><use href="#cross"/></svg></div>
<div class="sep" style="left:926px;top:140px;height:7px"></div>
<div class="d" style="left:931px;top:135px;width:17px;height:18px"><svg width="15" height="16"><use href="#zoomp"/></svg></div>
<div class="d" style="left:951px;top:135px;width:17px;height:18px"><svg width="15" height="16"><use href="#fit"/></svg></div>
<div class="d" style="left:971px;top:135px;width:17px;height:18px"><svg width="15" height="16"><use href="#zoomm"/></svg></div>
<div class="sep" style="left:992px;top:140px;height:7px"></div>
<div style="left:1016px;top:135px;width:6px;height:17px;background:#3c3c3c"></div>
<div style="left:862px;top:155px;width:162px;height:25px;background:repeating-conic-gradient(#e6e6e6 0 25%,#f8f8f8 0 50%) 0 0/10px 10px"></div>

<div class="h" style="left:862px;top:184px;width:162px;height:15px">Lớp</div>
<div style="left:862px;top:199px;width:162px;height:174px;background:#303030"></div>
<span class="t" style="left:866px;top:205px;font-size:9px;color:#b0b0b0">Độ trong</span>
<div class="sl" style="left:906px;top:204px;width:85px;height:12px"></div>
<span class="t" style="left:996px;top:205px;font-size:8.500px;color:#b0b0b0">100 %</span>
<span class="t" style="left:866px;top:224px;font-size:9px;color:#b0b0b0">Pha trộn</span>
<div style="left:909px;top:221px;width:110px;height:16px;background:#484848;border-radius:2px"><span class="t" style="left:2px;top:2px;font-size:9px;color:#999">Bình thường</span><span style="left:100px;top:7px;border:3px solid transparent;border-top-color:#aaa"></span></div>
<div style="left:869px;top:244px;width:9px;height:9px;border:1px solid #999;box-sizing:border-box"></div>
<span class="t" style="left:881px;top:243px;font-size:9px;color:#aaa">Bảo vệ alpha</span>
<div style="left:937px;top:244px;width:9px;height:9px;border:1px solid #444;box-sizing:border-box"></div>
<span class="t" style="left:949px;top:243px;font-size:9px;color:#606060">Xén bớt</span>
<div style="left:987px;top:244px;width:9px;height:9px;border:1px solid #aaa;box-sizing:border-box"></div>
<span class="t" style="left:999px;top:243px;font-size:9px;color:#aaa">Khóa</span>

<div style="left:864px;top:256px;width:158px;height:117px;background:#464646"></div>
<div style="left:864px;top:259px;width:14px;height:29px;background:#686868"></div>
<div style="left:867px;top:270px;width:8px;height:8px;border-radius:50%;background:#ddd"></div>
<div style="left:878px;top:259px;width:129px;height:29px;background:#5299d8"></div>
<svg style="left:890px;top:261px;background:#f8f0fc" width="26" height="26"><g fill="none" stroke="#b498ee" stroke-width="1"><path d="M3 7c3-4 5-2 7 0s4-3 7 0 4 1 6-1"/><path d="M3 12c3-3 5-1 7 0s4-3 7 0 4 1 6 0"/></g><path d="M4 19c4-4 6 3 9-1s5 3 9 0" fill="none" stroke="#9860fa" stroke-width="2"/></svg>
<span class="t" style="left:928px;top:268px;font-size:9.500px;font-weight:bold;color:#fff">Lớp1</span>
<svg style="left:990px;top:267px" width="15" height="15" viewBox="0 0 20 20"><circle cx="10" cy="10" r="6.500" fill="#fff"/><circle cx="10" cy="10" r="8" fill="none" stroke="#fff" stroke-width="4" stroke-dasharray="3.500 2.800"/><circle cx="10" cy="10" r="2" fill="#5299d8"/></svg>
<div style="left:1008px;top:259px;width:14px;height:114px;background:#3a3a3a"></div>
<div style="left:1008px;top:268px;width:14px;height:96px;background:linear-gradient(90deg,#777,#666);border-radius:4px"></div>
<span style="left:1012px;top:261px;border:3px solid transparent;border-bottom-color:#bbb;border-top:0"></span>
<span style="left:1012px;top:367px;border:3px solid transparent;border-top-color:#bbb;border-bottom:0"></span>

<div style="left:862px;top:373px;width:162px;height:24px;background:#1e1e1e"></div>
<div class="b" style="left:866px;top:376px;width:18px;height:18px"><svg width="18" height="18"><use href="#page"/></svg></div>
<div class="b" style="left:887px;top:376px;width:17px;height:18px"><svg width="17" height="18"><use href="#doc"/></svg></div>
<div class="b" style="left:907px;top:376px;width:17px;height:18px"><svg width="17" height="18"><use href="#doc"/></svg></div>
<div class="b" style="left:927px;top:376px;width:23px;height:18px"><svg width="17" height="18"><use href="#page"/></svg><span style="left:16px;top:8px;border:2.500px solid transparent;border-top-color:#ddd"></span></div>
<div class="b" style="left:953px;top:376px;width:17px;height:18px"><svg width="17" height="18"><use href="#folder"/></svg></div>
<div class="sep" style="left:974px;top:381px;height:7px"></div>
<div class="b" style="left:978px;top:376px;width:17px;height:18px"><svg width="17" height="18"><use href="#dup"/></svg></div>
<div style="left:1014px;top:376px;width:6px;height:17px;background:#3c3c3c"></div>

<div class="h" style="left:862px;top:401px;width:162px;height:16px">Brush Size</div>
<div style="left:862px;top:417px;width:146px;height:114px;background:#464646"></div>
<div class="c" style="left:863px;top:417px"><i style="left:14px;top:15px;width:1px;height:1px;background:#777"></i><b style="bottom:-2px">1</b></div>
<div class="c" style="left:893px;top:417px"><i style="left:14px;top:15px;width:1px;height:1px;background:#999"></i><b style="bottom:-2px">1.5</b></div>
<div class="c" style="left:923px;top:417px"><i style="left:14px;top:14px;width:2px;height:2px"></i><b style="bottom:-2px">2</b></div>
<div class="c" style="left:953px;top:417px"><i style="left:13px;top:14px;width:3px;height:3px"></i><b style="bottom:-2px">3</b></div>
<div class="c" style="left:863px;top:455px"><i style="left:13px;top:13px;width:3px;height:3px"></i><b>4</b></div>
<div class="c" style="left:893px;top:455px"><i style="left:13px;top:12px;width:4px;height:4px"></i><b>5</b></div>
<div class="c" style="left:923px;top:455px"><i style="left:11px;top:11px;width:6px;height:6px"></i><b>7</b></div>
<div class="c" style="left:953px;top:455px"><i style="left:10px;top:10px;width:8px;height:8px"></i><b>10</b></div>
<div class="c" style="left:863px;top:493px"><i style="left:8px;top:9px;width:10px;height:10px"></i><b>12</b></div>
<div class="c" style="left:893px;top:493px"><i style="left:8px;top:8px;width:12px;height:12px"></i><b>15</b></div>
<div class="c" style="left:923px;top:493px"><i style="left:6px;top:6px;width:16px;height:16px"></i><b>20</b></div>
<div class="c" style="left:953px;top:493px"><i style="left:5px;top:5px;width:18px;height:18px"></i><b>25</b></div>
<div style="left:1008px;top:417px;width:14px;height:114px;background:#2c2c2c"></div>
<div style="left:1010px;top:426px;width:12px;height:48px;background:#646464;border-radius:4px"></div>
<span style="left:1012px;top:420px;border:3px solid transparent;border-bottom-color:#bbb;border-top:0"></span>
<span style="left:1012px;top:525px;border:3px solid transparent;border-top-color:#bbb;border-bottom:0"></span>

<!-- pop/close icons on panels -->
<svg style="left:0;top:0" width="1024" height="552" fill="none" stroke="#b0b0b0"><g id="ic" transform="translate(0,1)">
<path d="M170 60h5v1M170 60v7h7v-4M174 63l3-3"/><path d="M183 60l5 5M188 60l-5 5" stroke="#ddd" stroke-width="2"/>
<path d="M170 129h5M170 129v7h7v-4M174 132l3-3"/><path d="M183 129l5 5M188 129l-5 5" stroke="#ddd" stroke-width="2"/>
<path d="M170 250h5M170 250v7h7v-4M174 253l3-3"/><path d="M183 250l5 5M188 250l-5 5" stroke="#ddd" stroke-width="2"/>
<path d="M170 305h5M170 305v7h7v-4M174 308l3-3"/><path d="M183 305l5 5M188 305l-5 5" stroke="#ddd" stroke-width="2"/>
<path d="M170 435h5M170 435v7h7v-4M174 438l3-3"/><path d="M183 435l5 5M188 435l-5 5" stroke="#ddd" stroke-width="2"/>
<path d="M1002 61h5M1002 61v7h7v-4M1006 64l3-3"/><path d="M1015 61l5 5M1020 61l-5 5" stroke="#ddd" stroke-width="2"/>
<path d="M1002 121h5M1002 121v7h7v-4M1006 124l3-3"/><path d="M1015 121l5 5M1020 121l-5 5" stroke="#ddd" stroke-width="2"/>
<path d="M1002 188h5M1002 188v7h7v-4M1006 191l3-3"/><path d="M1015 188l5 5M1020 188l-5 5" stroke="#ddd" stroke-width="2"/>
<path d="M1002 406h5M1002 406v7h7v-4M1006 409l3-3"/><path d="M1015 406l5 5M1020 406l-5 5" stroke="#ddd" stroke-width="2"/>
</g></svg>

<!-- taskbar -->
<div style="left:0;top:546px;width:1024px;height:6px;background:linear-gradient(#7d96b4,#a9c0dc 2px,#b0c6e0)"></div>
<div style="left:12px;top:548px;width:18px;height:18px;border-radius:50%;background:#dce8f4;border:1px solid #5a7a9a;box-sizing:border-box"></div>
<div style="left:64px;top:548px;width:14px;height:14px;border-radius:50%;background:#e8c848"></div>
<div style="left:208px;top:548px;width:10px;height:6px;background:#ccd4dc"></div>
<div style="left:244px;top:548px;width:18px;height:14px;border-radius:50%;background:#5a90e0"></div>
<div style="left:278px;top:546px;width:44px;height:6px;background:#d8d8d0;border:1px solid #8a9aaa;box-sizing:border-box"></div>
<div style="left:291px;top:549px;width:16px;height:16px;border-radius:50%;background:#d84038"></div>
<div style="left:335px;top:549px;width:16px;height:16px;border-radius:50%;background:#18a0c0"></div>
<div style="left:400px;top:547px;width:3px;height:5px;background:#c09040"></div>
<div style="left:430px;top:549px;width:16px;height:16px;border-radius:50%;background:#48c0f0"></div>
<div style="left:463px;top:546px;width:44px;height:6px;background:#eef2f8;border:1px solid #8a9aaa;box-sizing:border-box"></div>
<div style="left:860px;top:546px;width:164px;height:6px;background:linear-gradient(90deg,#a9c0dc,#8a9ab0 60%,#a0a8b4)"></div>
</div>
</body></html>
